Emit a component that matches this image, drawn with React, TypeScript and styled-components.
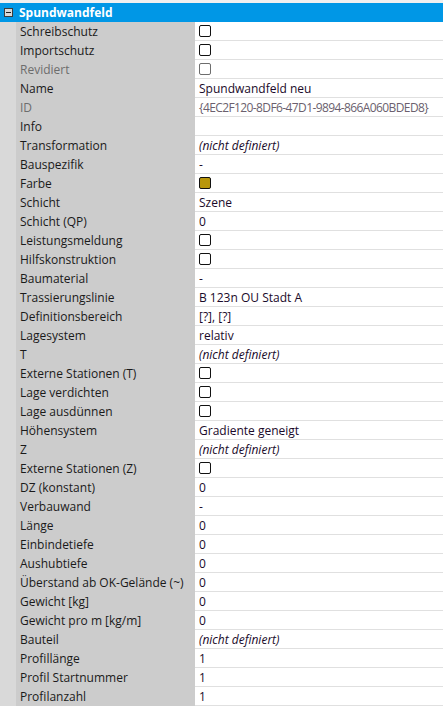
import React from 'react'
import styled, { createGlobalStyle } from 'styled-components'

const GlobalStyle = createGlobalStyle`
  html, body {
    margin: 0;
    padding: 0;
    background: #f0f0f0;
  }
  body {
    font-family: 'Open Sans', 'Noto Sans', 'Liberation Sans', sans-serif;
    font-size: 12px;
  }
`

const Grid = styled.div`
  width: 443px;
  height: 706px;
  padding-top: 3px;
  box-sizing: border-box;
  overflow: hidden;
  background: #f0f0f0;
`

const Category = styled.div`
  height: 19px;
  display: flex;
  align-items: center;
  background: #0097e6;
  color: #fff;
  font-weight: bold;
  padding-left: 4px;
  gap: 6px;
`

const ExpandBox = styled.span`
  width: 9px;
  height: 9px;
  box-sizing: border-box;
  border: 1px solid #3c3c3c;
  background: #d8d8d8;
  display: flex;
  align-items: center;
  justify-content: center;

  &::after {
    content: '';
    width: 5px;
    height: 1px;
    background: #1e1e1e;
  }
`

const Body = styled.div`
  display: flex;
`

const Margin = styled.div`
  width: 16px;
  flex: none;
  background: #d9d9d9;
`

const Rows = styled.div`
  flex: 1;
  display: flex;
  flex-direction: column;
`

const Row = styled.div`
  display: grid;
  grid-template-columns: 179px 1fr;
  height: 19px;
`

const Label = styled.div<{ $disabled?: boolean }>`
  background: #cccccc;
  padding-left: 4px;
  display: flex;
  align-items: center;
  color: ${({ $disabled }) => ($disabled ? '#6d6d6d' : '#1a1a1a')};
  white-space: nowrap;
`

const Value = styled.div<{ $disabled?: boolean; $italic?: boolean }>`
  background: #fff;
  border-bottom: 1px solid #e0e0e0;
  padding-left: 4px;
  display: flex;
  align-items: center;
  color: ${({ $disabled }) => ($disabled ? '#6b5f6e' : '#1a0a2a')};
  font-style: ${({ $italic }) => ($italic ? 'italic' : 'normal')};
  letter-spacing: ${({ $disabled }) => ($disabled ? '-0.6px' : 'normal')};
  white-space: nowrap;
  overflow: hidden;
`

const Check = styled.span<{ $disabled?: boolean }>`
  width: 12px;
  height: 12px;
  box-sizing: border-box;
  border: 1px solid ${({ $disabled }) => ($disabled ? '#6d6d6d' : '#111')};
  border-radius: 2px;
  background: #fff;
`

const Swatch = styled.span<{ $color: string }>`
  width: 12px;
  height: 12px;
  box-sizing: border-box;
  border: 1px solid #111;
  border-radius: 2px;
  background: ${({ $color }) => $color};
`

type Prop = {
  label: string
  value?: string
  kind?: 'text' | 'check' | 'color' | 'undef'
  disabled?: boolean
}

const UNDEF = '(nicht definiert)'

const props: Prop[] = [
  { label: 'Schreibschutz', kind: 'check' },
  { label: 'Importschutz', kind: 'check' },
  { label: 'Revidiert', kind: 'check', disabled: true },
  { label: 'Name', value: 'Spundwandfeld neu' },
  { label: 'ID', value: '{4EC2F120-8DF6-47D1-9894-866A060BDED8}', disabled: true },
  { label: 'Info', value: '' },
  { label: 'Transformation', kind: 'undef' },
  { label: 'Bauspezifik', value: '-' },
  { label: 'Farbe', kind: 'color', value: '#b8960a' },
  { label: 'Schicht', value: 'Szene' },
  { label: 'Schicht (QP)', value: '0' },
  { label: 'Leistungsmeldung', kind: 'check' },
  { label: 'Hilfskonstruktion', kind: 'check' },
  { label: 'Baumaterial', value: '-' },
  { label: 'Trassierungslinie', value: 'B 123n OU Stadt A' },
  { label: 'Definitionsbereich', value: '[?], [?]' },
  { label: 'Lagesystem', value: 'relativ' },
  { label: 'T', kind: 'undef' },
  { label: 'Externe Stationen (T)', kind: 'check' },
  { label: 'Lage verdichten', kind: 'check' },
  { label: 'Lage ausdünnen', kind: 'check' },
  { label: 'Höhensystem', value: 'Gradiente geneigt' },
  { label: 'Z', kind: 'undef' },
  { label: 'Externe Stationen (Z)', kind: 'check' },
  { label: 'DZ (konstant)', value: '0' },
  { label: 'Verbauwand', value: '-' },
  { label: 'Länge', value: '0' },
  { label: 'Einbindetiefe', value: '0' },
  { label: 'Aushubtiefe', value: '0' },
  { label: 'Überstand ab OK-Gelände (~)', value: '0' },
  { label: 'Gewicht [kg]', value: '0' },
  { label: 'Gewicht pro m [kg/m]', value: '0' },
  { label: 'Bauteil', kind: 'undef' },
  { label: 'Profillänge', value: '1' },
  { label: 'Profil Startnummer', value: '1' },
  { label: 'Profilanzahl', value: '1' },
]

const renderValue = (p: Prop) => {
  switch (p.kind) {
    case 'check':
      return <Check $disabled={p.disabled} />
    case 'color':
      return <Swatch $color={p.value || '#000'} />
    case 'undef':
      return UNDEF
    default:
      return p.value
  }
}

const App = () => (
  <>
    <GlobalStyle />
    <Grid>
      <Category>
        <ExpandBox />
        Spundwandfeld
      </Category>
      <Body>
        <Margin />
        <Rows>
          {props.map((p) => (
            <Row key={p.label}>
              <Label $disabled={p.disabled}>{p.label}</Label>
              <Value $disabled={p.disabled} $italic={p.kind === 'undef'}>
                {renderValue(p)}
              </Value>
            </Row>
          ))}
        </Rows>
      </Body>
    </Grid>
  </>
)

export default App
